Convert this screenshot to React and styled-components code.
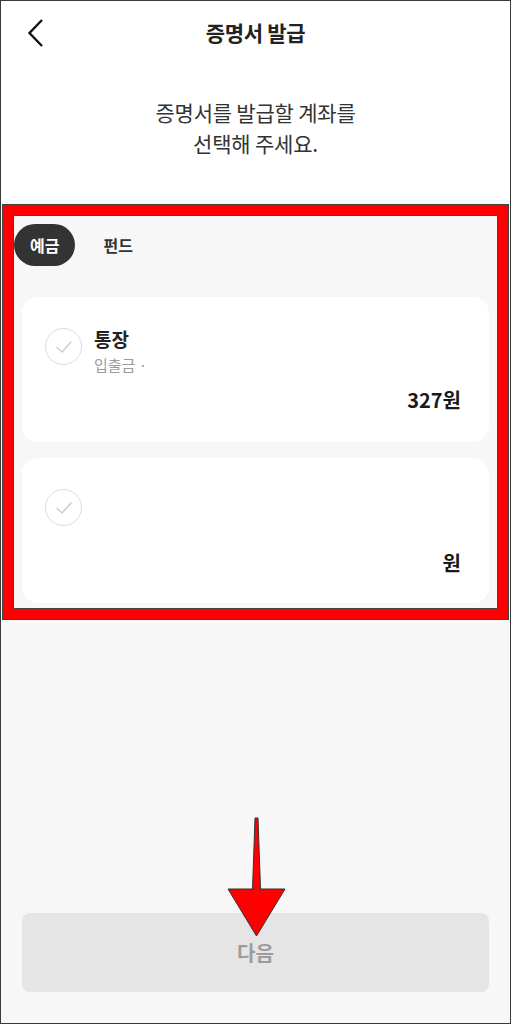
import React from "react";
import styled, { createGlobalStyle } from "styled-components";

const GlobalStyle = createGlobalStyle`
  html, body {
    margin: 0;
    padding: 0;
    background: #ffffff;
  }
  * {
    box-sizing: border-box;
  }
`;

const Screen = styled.div`
  position: relative;
  width: 511px;
  height: 1024px;
  display: flex;
  flex-direction: column;
  border: 1px solid #3a3a3a;
  background: #f7f7f7;
  font-family: "Noto Sans CJK KR", "Noto Sans", sans-serif;
  color: #222;
  overflow: hidden;
`;

const Top = styled.header`
  background: #ffffff;
  height: 199px;
  display: flex;
  flex-direction: column;
`;

const NavBar = styled.div`
  position: relative;
  height: 62px;
  display: flex;
  align-items: center;
  justify-content: center;
`;

const BackButton = styled.button`
  position: absolute;
  left: 18px;
  top: 12px;
  width: 34px;
  height: 40px;
  padding: 0;
  border: 0;
  background: none;
  display: flex;
  align-items: center;
  justify-content: center;
`;

const Title = styled.h1`
  margin: 0;
  font-size: 21px;
  font-weight: 700;
  color: #222;
  letter-spacing: -0.3px;
`;

const Guide = styled.p`
  margin: 34px 0 0;
  text-align: center;
  font-size: 21px;
  line-height: 31px;
  font-weight: 400;
  color: #333;
  letter-spacing: -0.2px;
`;

const Body = styled.main`
  flex: 1;
  display: flex;
  flex-direction: column;
  padding: 24px 21px 31px;
`;

const Tabs = styled.div`
  display: flex;
  align-items: center;
  gap: 6px;
  margin-left: -8px;
`;

const Tab = styled.button`
  height: 42px;
  padding: 0 ${(p) => (p.$active ? "16px" : "22px")};
  border: 0;
  border-radius: 21px;
  background: ${(p) => (p.$active ? "#333333" : "transparent")};
  color: ${(p) => (p.$active ? "#ffffff" : "#333333")};
  font-family: inherit;
  font-size: 16px;
  font-weight: 700;
`;

const List = styled.div`
  display: flex;
  flex-direction: column;
  gap: 16px;
  margin-top: 31px;
`;

const Card = styled.div`
  height: 145px;
  background: #ffffff;
  border-radius: 16px;
  padding: 31px 28px 0 23px;
  display: flex;
  flex-direction: column;
`;

const Row = styled.div`
  display: flex;
  align-items: flex-start;
  gap: 12px;
  min-height: 37px;
`;

const Check = styled.span`
  width: 37px;
  height: 37px;
  flex: none;
  border-radius: 50%;
  border: 1px solid #dcdcdc;
  display: flex;
  align-items: center;
  justify-content: center;
`;

const Info = styled.div`
  display: flex;
  flex-direction: column;
  margin-top: -1px;
`;

const Name = styled.div`
  font-size: 19px;
  font-weight: 700;
  line-height: 24px;
  color: #222;
`;

const Kind = styled.div`
  margin-top: 4px;
  font-size: 15px;
  line-height: 20px;
  color: #9a9a9a;
`;

const Amount = styled.div`
  margin-top: ${(p) => (p.$empty ? "24px" : "12px")};
  text-align: right;
  font-size: 20px;
  font-weight: 700;
  line-height: 26px;
  color: #1a1a1a;
`;

const Spacer = styled.div`
  flex: 1;
`;

const NextButton = styled.button`
  height: 79px;
  border: 0;
  border-radius: 8px;
  background: #e5e5e5;
  color: #9c9c9c;
  font-family: inherit;
  font-size: 20px;
  font-weight: 700;
`;

const Highlight = styled.div`
  position: absolute;
  left: 2px;
  top: 204px;
  width: 505px;
  height: 414px;
  border: 10px solid #ff0000;
  outline: 1px solid #444;
  box-shadow: inset 0 0 0 1px #444;
  pointer-events: none;
`;

const Pointer = styled.svg`
  position: absolute;
  left: 224px;
  top: 815px;
  pointer-events: none;
`;

const CheckMark = () => (
  <svg width="18" height="14" viewBox="0 0 18 14" fill="none">
    <path d="M2 7.5 L7 12 L16 2" stroke="#cfcfcf" strokeWidth="1.6" strokeLinecap="round" strokeLinejoin="round" />
  </svg>
);

const accounts = [
  { name: "통장", kind: "입출금 ·", amount: "327원" },
  { name: "", kind: "", amount: "원" },
];

export default function App() {
  return (
    <>
      <GlobalStyle />
      <Screen>
        <Top>
          <NavBar>
            <BackButton aria-label="뒤로">
              <svg width="18" height="30" viewBox="0 0 18 30" fill="none">
                <path d="M15 2 L2.5 15 L15 28" stroke="#111" strokeWidth="2.4" />
              </svg>
            </BackButton>
            <Title>증명서 발급</Title>
          </NavBar>
          <Guide>
            증명서를 발급할 계좌를
            <br />
            선택해 주세요.
          </Guide>
        </Top>

        <Body>
          <Tabs>
            <Tab $active>예금</Tab>
            <Tab>펀드</Tab>
          </Tabs>

          <List>
            {accounts.map((a, i) => (
              <Card key={i}>
                <Row>
                  <Check>
                    <CheckMark />
                  </Check>
                  {a.name && (
                    <Info>
                      <Name>{a.name}</Name>
                      <Kind>{a.kind}</Kind>
                    </Info>
                  )}
                </Row>
                <Amount $empty={!a.name}>{a.amount}</Amount>
              </Card>
            ))}
          </List>

          <Spacer />
          <NextButton>다음</NextButton>
        </Body>

        <Highlight />
        <Pointer width="64" height="124" viewBox="0 0 64 124">
          <polygon
            points="30,2 33,2 35.5,73 60,73 31.5,120 3,73 27.5,73"
            fill="#ff0000"
            stroke="#333"
            strokeWidth="1"
            strokeLinejoin="miter"
          />
        </Pointer>
      </Screen>
    </>
  );
}
